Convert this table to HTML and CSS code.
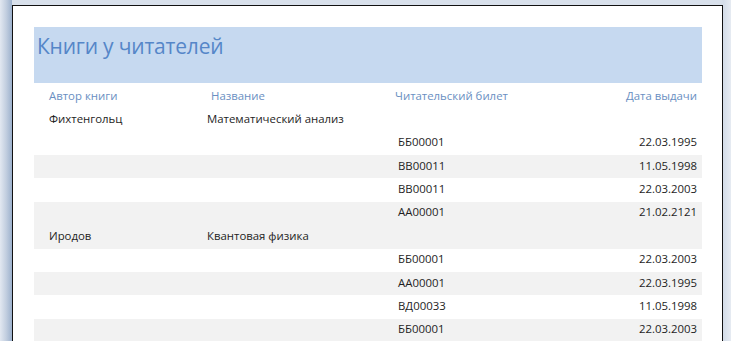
FILE: index.html
```html
<!DOCTYPE html>
<html lang="ru">
<head>
<meta charset="utf-8">
<title>Книги у читателей</title>
<link rel="stylesheet" href="styles.css">
</head>
<body>
<div class="page">
  <div class="report">
    <div class="title-band"><h1 class="title">Книги у читателей</h1></div>
    <div class="grid col-head">
      <div class="c1">Автор книги</div>
      <div class="c2">Название</div>
      <div class="c3">Читательский билет</div>
      <div class="c4">Дата выдачи</div>
    </div>

    <div class="grid row group">
      <div class="c1">Фихтенгольц</div>
      <div class="c2">Математический анализ</div>
      <div class="c3"></div>
      <div class="c4"></div>
    </div>
    <div class="grid row"><div class="c1"></div><div class="c2"></div><div class="c3">ББ00001</div><div class="c4">22.03.1995</div></div>
    <div class="grid row alt"><div class="c1"></div><div class="c2"></div><div class="c3">ВВ00011</div><div class="c4">11.05.1998</div></div>
    <div class="grid row"><div class="c1"></div><div class="c2"></div><div class="c3">ВВ00011</div><div class="c4">22.03.2003</div></div>
    <div class="grid row alt"><div class="c1"></div><div class="c2"></div><div class="c3">АА00001</div><div class="c4">21.02.2121</div></div>

    <div class="grid row group alt">
      <div class="c1">Иродов</div>
      <div class="c2">Квантовая физика</div>
      <div class="c3"></div>
      <div class="c4"></div>
    </div>
    <div class="grid row"><div class="c1"></div><div class="c2"></div><div class="c3">ББ00001</div><div class="c4">22.03.2003</div></div>
    <div class="grid row alt"><div class="c1"></div><div class="c2"></div><div class="c3">АА00001</div><div class="c4">22.03.1995</div></div>
    <div class="grid row"><div class="c1"></div><div class="c2"></div><div class="c3">ВД00033</div><div class="c4">11.05.1998</div></div>
    <div class="grid row alt"><div class="c1"></div><div class="c2"></div><div class="c3">ББ00001</div><div class="c4">22.03.2003</div></div>
  </div>
</div>
</body>
</html>
```

FILE: styles.css
```css
html, body {
  margin: 0;
  padding: 0;
  height: 100%;
  overflow: hidden;
}

body {
  background:
    linear-gradient(to right, #e2e8f1 0px, #c3cfe0 6px, #9cb1cd 12px, transparent 12px) no-repeat,
    linear-gradient(to left, #e6ebf2 0px, #d3dce8 8px, transparent 9px) no-repeat,
    #d8e0eb;
  font-family: "Open Sans", "Noto Sans", sans-serif;
  padding: 5px 0 0 12px;
  box-sizing: border-box;
}

.page {
  width: 711px;
  height: 336px;
  overflow: hidden;
  box-sizing: border-box;
  background: #ffffff;
  border-left: 1px solid #111;
  border-top: 1px solid #111;
  border-right: 1px solid #111;
  padding: 21px 0 0 21px;
}

.report {
  width: 668px;
}

.title-band {
  background: #c6d9f0;
  height: 56px;
  box-sizing: border-box;
  padding: 5px 0 0 3px;
}

.title {
  margin: 0;
  font-weight: 400;
  font-size: 21px;
  line-height: 28px;
  color: #5586c8;
  letter-spacing: -0.2px;
}

.grid {
  display: grid;
  grid-template-columns: 159px 187px 1fr 140px;
  padding: 0 5px 0 15px;
  align-items: center;
  font-size: 11.4px;
}

.col-head {
  height: 25.2px;
  color: #6a8fc2;
}

.col-head .c2 { padding-left: 3px; }
.col-head .c3 { margin-left: -3px; }

.row {
  height: 23.4px;
  box-sizing: border-box;
  padding-bottom: 3px;
  color: #1e1e1e;
}

.row.alt {
  background: #f2f2f2;
}

.group .c2 { margin-left: -1px; }

.c4 {
  text-align: right;
}

.c3 {
  padding-left: 3px;
}
```
